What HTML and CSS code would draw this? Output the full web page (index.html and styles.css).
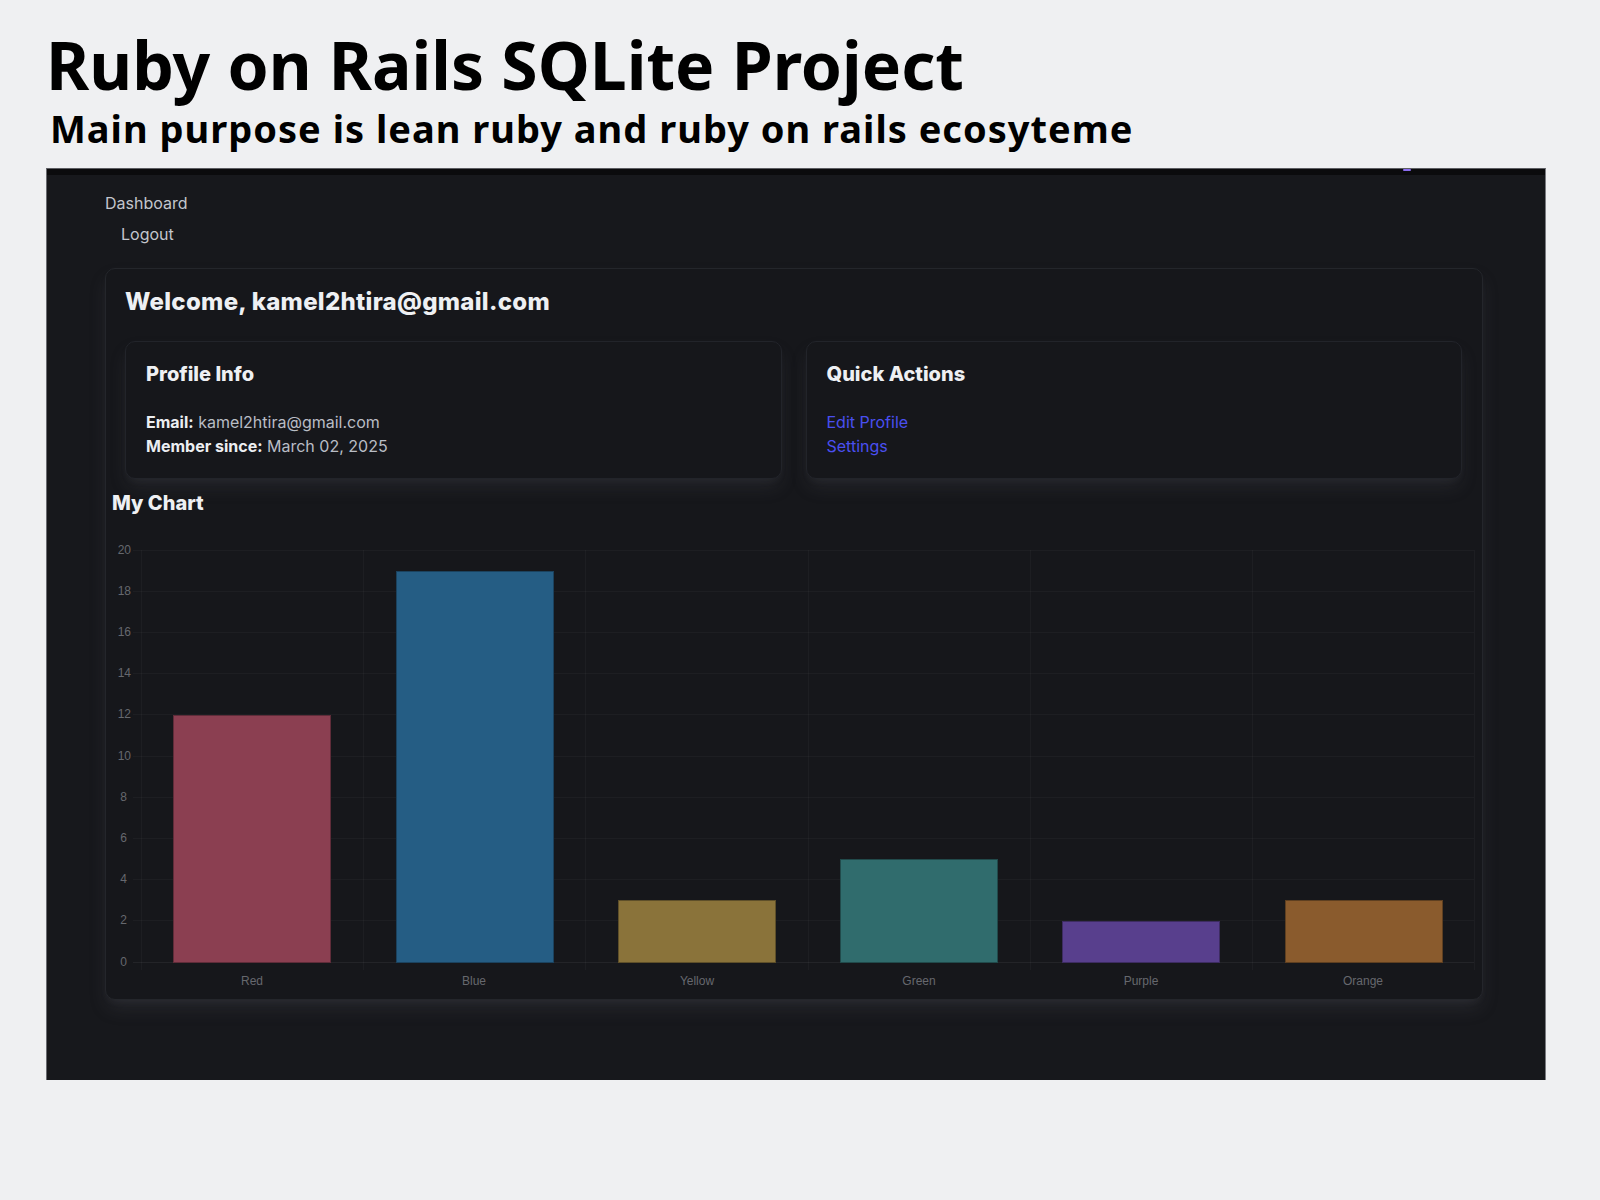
FILE: index.html
```html
<!DOCTYPE html>
<html lang="en">
<head>
<meta charset="utf-8">
<title>Ruby on Rails SQLite Project</title>
<link rel="stylesheet" href="styles.css">
</head>
<body>
<header class="intro">
  <h1 class="intro-title">Ruby on Rails SQLite Project</h1>
  <p class="intro-sub">Main purpose is lean ruby and ruby on rails ecosyteme</p>
</header>

<section class="app">
  <div class="topbar"><span class="topbar-mark"></span></div>
  <nav class="nav">
    <a class="nav-link" href="#">Dashboard</a>
    <button class="nav-logout" type="button">Logout</button>
  </nav>

  <main class="card">
    <h2 class="welcome">Welcome, kamel2htira@gmail.com</h2>

    <div class="grid">
      <div class="box">
        <h3 class="box-title">Profile Info</h3>
        <p class="line"><strong>Email:</strong> kamel2htira@gmail.com</p>
        <p class="line"><strong>Member since:</strong> March 02, 2025</p>
      </div>
      <div class="box">
        <h3 class="box-title">Quick Actions</h3>
        <a class="action" href="#">Edit Profile</a>
        <a class="action" href="#">Settings</a>
      </div>
    </div>

    <section class="chart">
      <h3 class="chart-title">My Chart</h3>
      <svg class="chart-svg" width="1366" height="460" viewBox="0 0 1366 460">
        <g class="grid-lines" stroke="rgba(255,255,255,0.03)" stroke-width="1">
          <line x1="21" y1="20.5" x2="1362" y2="20.5"/>
          <line x1="21" y1="61.5" x2="1362" y2="61.5"/>
          <line x1="21" y1="102.5" x2="1362" y2="102.5"/>
          <line x1="21" y1="143.5" x2="1362" y2="143.5"/>
          <line x1="21" y1="184.5" x2="1362" y2="184.5"/>
          <line x1="21" y1="226.5" x2="1362" y2="226.5"/>
          <line x1="21" y1="267.5" x2="1362" y2="267.5"/>
          <line x1="21" y1="308.5" x2="1362" y2="308.5"/>
          <line x1="21" y1="349.5" x2="1362" y2="349.5"/>
          <line x1="21" y1="390.5" x2="1362" y2="390.5"/>
          <line x1="29.5" y1="20" x2="29.5" y2="440"/>
          <line x1="251.5" y1="20" x2="251.5" y2="440"/>
          <line x1="473.5" y1="20" x2="473.5" y2="440"/>
          <line x1="696.5" y1="20" x2="696.5" y2="440"/>
          <line x1="918.5" y1="20" x2="918.5" y2="440"/>
          <line x1="1140.5" y1="20" x2="1140.5" y2="440"/>
          <line x1="1362.5" y1="20" x2="1362.5" y2="440"/>
        </g>
        <line x1="21" y1="432.5" x2="1362" y2="432.5" stroke="rgba(255,255,255,0.06)" stroke-width="1"/>

        <g class="y-ticks" font-family="Liberation Sans, Arial, sans-serif" font-size="12" fill="#66686e" text-anchor="end">
          <text x="19" y="24">20</text>
          <text x="19" y="65">18</text>
          <text x="19" y="106">16</text>
          <text x="19" y="147">14</text>
          <text x="19" y="188">12</text>
          <text x="19" y="230">10</text>
          <text x="15" y="271">8</text>
          <text x="15" y="312">6</text>
          <text x="15" y="353">4</text>
          <text x="15" y="394">2</text>
          <text x="15" y="436">0</text>
        </g>

        <g class="bars" stroke-width="1">
          <rect x="61.5" y="185.5" width="157" height="247" fill="#8b3f51" stroke="#5f2c39"/>
          <rect x="284.5" y="41.5" width="157" height="391" fill="#255d84" stroke="#1b425e"/>
          <rect x="506.5" y="370.5" width="157" height="62" fill="#8a733a" stroke="#5e4f29"/>
          <rect x="728.5" y="329.5" width="157" height="103" fill="#306c6d" stroke="#214a4b"/>
          <rect x="950.5" y="391.5" width="157" height="41" fill="#583f8d" stroke="#3d2c61"/>
          <rect x="1173.5" y="370.5" width="157" height="62" fill="#8a5b2d" stroke="#5e3f20"/>
        </g>

        <g class="x-ticks" font-family="Liberation Sans, Arial, sans-serif" font-size="12" fill="#66686e" text-anchor="middle">
          <text x="140" y="455">Red</text>
          <text x="362" y="455">Blue</text>
          <text x="585" y="455">Yellow</text>
          <text x="807" y="455">Green</text>
          <text x="1029" y="455">Purple</text>
          <text x="1251" y="455">Orange</text>
        </g>
      </svg>
    </section>
  </main>
</section>
</body>
</html>
```

FILE: styles.css
```css
* { box-sizing: border-box; }

html, body {
  margin: 0;
  padding: 0;
  background: #eff0f2;
}

body {
  width: 1600px;
  height: 1200px;
  overflow: hidden;
  font-family: Inter, "Noto Sans", sans-serif;
}

.intro {
  padding: 31px 0 0 46px;
}

.intro-title {
  margin: 0;
  font-family: "Noto Sans", sans-serif;
  font-weight: 700;
  font-size: 66px;
  line-height: 66px;
  color: #000;
  letter-spacing: 0;
}

.intro-sub {
  margin: 12px 0 0 4px;
  font-family: "Noto Sans", sans-serif;
  font-weight: 700;
  font-size: 38px;
  line-height: 38px;
  color: #000;
  letter-spacing: 1px;
}

.app {
  margin: 21px 0 0 46px;
  width: 1500px;
  height: 912px;
  background: #17181c;
  border-top: 1px solid #5c5d62;
  border-left: 1px solid #6a6b70;
  border-right: 1px solid #7a7b80;
  display: flex;
  flex-direction: column;
}

.topbar {
  height: 6px;
  background: #0b0b0d;
  display: flex;
  justify-content: flex-end;
}

.topbar-mark {
  width: 8px;
  height: 2px;
  margin-right: 134px;
  background: #8b6cf0;
  border-radius: 1px;
}

.nav {
  padding: 16px 0 0 58px;
  display: flex;
  flex-direction: column;
  align-items: flex-start;
  gap: 7px;
}

.nav-link {
  font-size: 16px;
  line-height: 24px;
  color: #c3c6cd;
  text-decoration: none;
}

.nav-logout {
  margin: 0 0 0 16px;
  padding: 0;
  border: 0;
  background: none;
  font-family: Inter, sans-serif;
  font-size: 16px;
  line-height: 24px;
  color: #c3c6cd;
}

.card {
  margin: 22px 0 0 58px;
  width: 1378px;
  background: #16171b;
  border: 1px solid #24262b;
  border-radius: 10px;
  padding: 17px 20px 9px 19px;
  box-shadow: 0 10px 18px -2px rgba(90, 92, 100, 0.22), 0 4px 8px -4px rgba(90, 92, 100, 0.2);
}

.welcome {
  margin: 0;
  font-size: 24px;
  line-height: 32px;
  font-weight: 800;
  letter-spacing: 0.3px;
  color: #eef0f3;
}

.grid {
  margin-top: 23px;
  display: grid;
  grid-template-columns: 1fr 1fr;
  gap: 24px;
}

.box {
  height: 138px;
  background: #16171b;
  border: 1px solid #22242a;
  border-radius: 10px;
  padding: 20px;
  box-shadow: 0 10px 18px -2px rgba(90, 92, 100, 0.2), 0 4px 8px -4px rgba(90, 92, 100, 0.18);
  display: flex;
  flex-direction: column;
}

.box-title {
  margin: 0 0 24px 0;
  font-size: 20px;
  line-height: 24px;
  font-weight: 800;
  color: #eef0f3;
}

.line {
  margin: 0;
  font-size: 16px;
  line-height: 24px;
  color: #b9bdc5;
}

.line strong {
  color: #eceef1;
  font-weight: 700;
}

.action {
  font-size: 16px;
  line-height: 24px;
  color: #4a4ff0;
  text-decoration: none;
}

.chart {
  margin: 10px 0 0 -13px;
}

.chart-title {
  margin: 0 0 13px 0;
  font-size: 20px;
  line-height: 28px;
  font-weight: 800;
  color: #eef0f3;
}

.chart-svg {
  display: block;
}
```
